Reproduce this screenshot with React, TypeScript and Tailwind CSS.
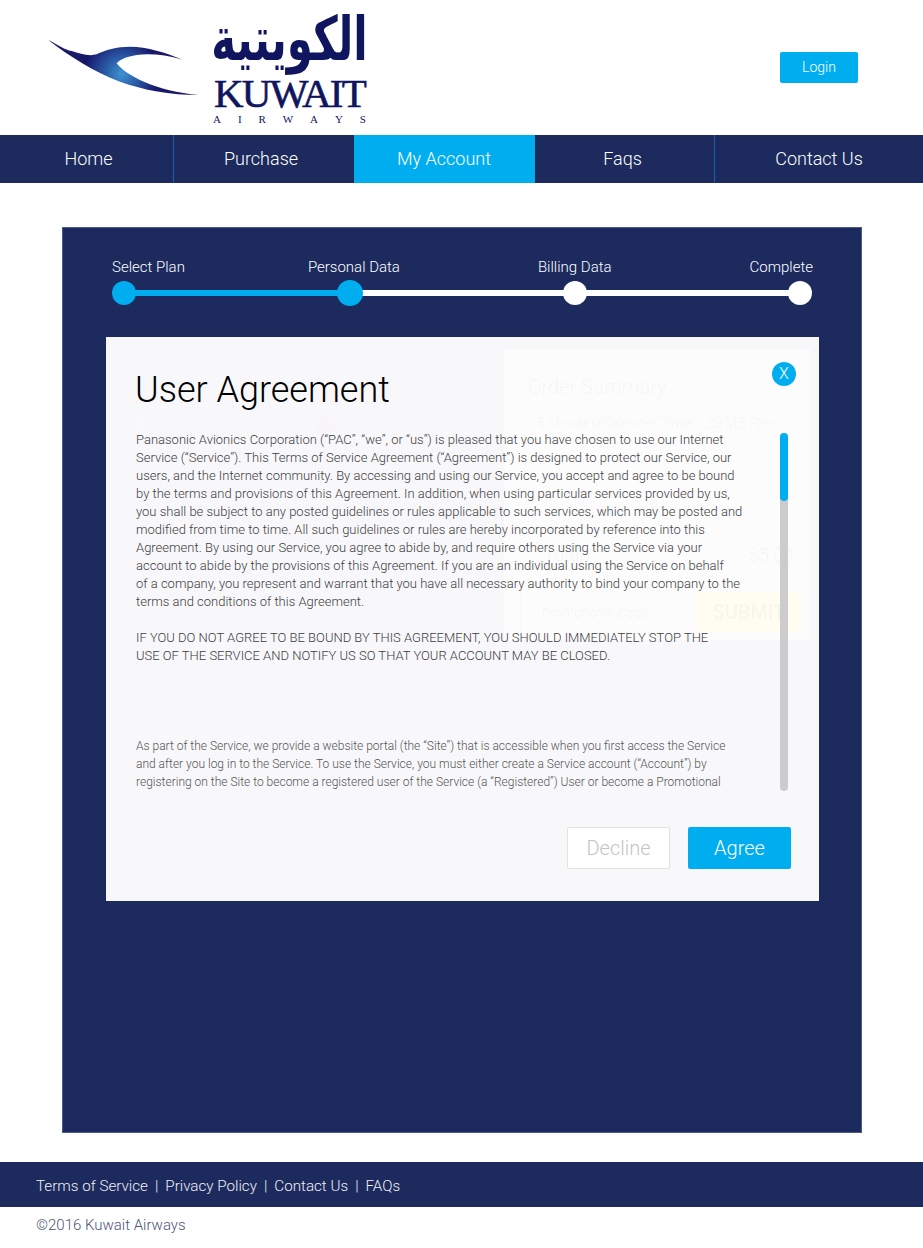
import React from "react";

const navItems = [
  { label: "Home", cls: "pl-[4px] border-r border-[#1d5fa8]" },
  { label: "Purchase", cls: "pr-[6px]" },
  { label: "My Account", cls: "pr-[1px] bg-[#00aeef]" },
  { label: "Faqs", cls: "pr-[4px] border-r border-[#1d5fa8]" },
  { label: "Contact Us", cls: "" },
];

const para1 = [
  "Panasonic Avionics Corporation (“PAC”, “we”, or “us”) is pleased that you have chosen to use our Internet",
  "Service (“Service”). This Terms of Service Agreement (“Agreement”) is designed to protect our Service, our",
  "users, and the Internet community. By accessing and using our Service, you accept and agree to be bound",
  "by the terms and provisions of this Agreement. In addition, when using particular services provided by us,",
  "you shall be subject to any posted guidelines or rules applicable to such services, which may be posted and",
  "modified from time to time. All such guidelines or rules are hereby incorporated by reference into this",
  "Agreement. By using our Service, you agree to abide by, and require others using the Service via your",
  "account to abide by the provisions of this Agreement. If you are an individual using the Service on behalf",
  "of a company, you represent and warrant that you have all necessary authority to bind your company to the",
  "terms and conditions of this Agreement.",
];

const para2 = [
  "IF YOU DO NOT AGREE TO BE BOUND BY THIS AGREEMENT, YOU SHOULD IMMEDIATELY STOP THE",
  "USE OF THE SERVICE AND NOTIFY US SO THAT YOUR ACCOUNT MAY BE CLOSED.",
];

const para3 = [
  "As part of the Service, we provide a website portal (the “Site”) that is accessible when you first access the Service",
  "and after you log in to the Service. To use the Service, you must either create a Service account (“Account”) by",
  "registering on the Site to become a registered user of the Service (a “Registered”) User or become a Promotional",
];

const Logo = () => (
  <div className="flex items-start">
    <svg width="155" height="60" viewBox="51 111 465 180" className="ml-[47px] mt-[37px]">
      <defs>
        <radialGradient id="wing" gradientUnits="userSpaceOnUse" cx="275" cy="222" r="140">
          <stop offset="0" stopColor="#3f92d2" />
          <stop offset="0.35" stopColor="#2a5ca6" />
          <stop offset="0.8" stopColor="#17176b" />
          <stop offset="1" stopColor="#1a1a66" />
        </radialGradient>
      </defs>
      <path
        d="M55 120 C85 135 105 150 125 153 C150 160 175 170 200 163 C225 150 260 140 300 140 C350 140 410 158 457 179 C410 165 360 160 320 165 C290 170 270 178 260 190 C285 225 380 275 507 285 C420 285 340 270 270 245 C190 215 120 170 55 120 Z"
        fill="url(#wing)"
      />
    </svg>
    <div className="ml-[11px] flex w-[153px] flex-col items-center text-[#10155f]">
      <div
        dir="rtl"
        className="mt-[9px] h-[62px] scale-y-[1.45] text-[42px] leading-[62px] font-bold whitespace-nowrap [font-family:'DejaVu_Sans',sans-serif]"
      >
        الكويتية
      </div>
      <div className="mt-[2px] text-[41px] leading-[40px] tracking-[-1.8px] whitespace-nowrap [-webkit-text-stroke:0.6px_#10155f] [font-family:'Liberation_Serif',serif]">
        KUWAIT
      </div>
      <div className="flex w-full justify-between text-[11px] leading-[12px] [font-family:'Liberation_Serif',serif]">
        {"AIRWAYS".split("").map((c, i) => (
          <span key={i}>{c}</span>
        ))}
      </div>
    </div>
  </div>
);

const Stepper = () => (
  <div className="mx-[49px] pt-[30px]">
    <div className="flex text-[15px] leading-[18px] font-light whitespace-nowrap text-white">
      <span>Select Plan</span>
      <span className="ml-[123px]">Personal Data</span>
      <span className="ml-[138px]">Billing Data</span>
      <span className="-mr-[1px] ml-auto">Complete</span>
    </div>
    <div className="relative mt-[4px] flex h-[26px] items-center justify-between">
      <div className="absolute left-[12px] right-[12px] h-[6px] bg-white" />
      <div className="absolute left-[12px] h-[6px] w-[226px] bg-[#00aeef]" />
      <div className="relative h-6 w-6 rounded-full bg-[#00aeef]" />
      <div className="relative h-[26px] w-[26px] rounded-full bg-[#00aeef]" />
      <div className="relative h-6 w-6 rounded-full bg-white" />
      <div className="relative h-6 w-6 rounded-full bg-white" />
    </div>
  </div>
);

// what is left of the page behind the modal, barely visible
const GhostPage = () => (
  <>
    <div className="absolute left-[25px] top-[78px] h-[18px] w-[18px] rounded-full border border-[#1c2a5e]/[0.02] bg-white/20" />
    <div className="absolute left-[210px] top-[78px] h-5 w-5 rounded-full bg-[#fdeef2]/25" />
    <div className="absolute left-[398px] top-[12px] h-[291px] w-[306px] bg-white/60 text-[#1c2a5e]/[0.05]">
      <div className="ml-[24px] mt-[25px] text-[20px] leading-[26px]">Order Summary</div>
      <div className="ml-[33px] mt-[13px] text-[14px] leading-[20px] whitespace-nowrap">5 Minutes(Calender Time) - 20 MB Plan</div>
      <div className="mt-[110px] flex justify-between pl-[40px] pr-[17px] text-[18px] leading-[24px]">
        <span>Total</span>
        <span>$5.00</span>
      </div>
      <div className="ml-[16px] mr-[9px] mt-[25px] flex h-[40px] items-center justify-between border-l border-[#1c2a5e]/[0.02] pl-[21px]">
        <span className="text-[13.5px]">Promotional Code</span>
        <span className="flex h-[40px] w-[104px] items-center justify-center bg-[#fffdf2] text-[20px] font-medium text-[#1c2a5e]/[0.05]">SUBMIT</span>
      </div>
    </div>
  </>
);

const Modal = () => (
  <div className="relative ml-[43px] mt-[31px] h-[564px] w-[713px] bg-[#f8f8fb] font-light text-[#3d3d3d]">
    <GhostPage />
    <button className="absolute right-[23px] top-[25px] flex h-6 w-6 items-center justify-center rounded-full bg-[#00aeef] text-[16px] font-light text-white">
      X
    </button>
    <div className="relative pl-[30px] pt-[31px]">
      <h1 className="-ml-[1px] text-[36px] leading-[44px] font-light text-black">User Agreement</h1>
      <div className="relative mt-[19px] flex h-[360px] items-start">
        <div className="w-[644px] shrink-0 text-[13px] leading-[18px] whitespace-nowrap">
          {para1.map((l) => (
            <div key={l}>{l}</div>
          ))}
          <div className="mt-[18px]">
            {para2.map((l) => (
              <div key={l}>{l}</div>
            ))}
          </div>
          <div className="mt-[72px] text-[12px] text-[#555]">
            {para3.map((l) => (
              <div key={l}>{l}</div>
            ))}
          </div>
        </div>
        <div className="mt-[2px] h-[358px] w-2 rounded-full bg-[#cccccc]">
          <div className="h-[68px] rounded-full bg-[#00aeef]" />
        </div>
      </div>
      <div className="mt-[36px] flex justify-end gap-[18px] pr-[28px]">
        <button className="h-[42px] w-[103px] rounded-[2px] border border-[#e2e2e2] bg-white text-[20px] font-light text-[#c4c4c4]">
          Decline
        </button>
        <button className="h-[42px] w-[103px] rounded-[2px] bg-[#00aeef] text-[20px] font-light text-white">
          Agree
        </button>
      </div>
    </div>
  </div>
);

export default function App() {
  return (
    <div className="w-[923px] bg-white font-light [font-family:Roboto,sans-serif]">
      <header className="flex h-[135px] items-start justify-between">
        <Logo />
        <button className="mr-[65px] mt-[52px] h-[31px] w-[78px] rounded-[2px] bg-[#00aeef] text-[14px] font-light text-white">
          Login
        </button>
      </header>

      <nav className="grid h-[48px] grid-cols-[174px_180px_181px_180px_208px] bg-[#1c2a5e] text-[18px] text-white">
        {navItems.map((n) => (
          <div key={n.label} className={"flex items-center justify-center pb-[2px] " + n.cls}>
            {n.label}
          </div>
        ))}
      </nav>

      <main className="px-[62px] pt-[44px] pb-[29px]">
        <div className="h-[906px] w-[800px] border border-[#4a5a8a] bg-[#1c2a5e]">
          <Stepper />
          <Modal />
        </div>
      </main>

      <footer className="flex h-[45px] items-center gap-[7px] bg-[#1c2a5e] pl-[36px] pt-[3px] text-[15.2px] text-[#f0f0f5]">
        <span>Terms of Service</span>
        <span>|</span>
        <span>Privacy Policy</span>
        <span>|</span>
        <span>Contact Us</span>
        <span>|</span>
        <span>FAQs</span>
      </footer>
      <div className="h-[41px] pl-[36px] pt-[9px] text-[15px] leading-[18px] text-[#4b5578]">©2016 Kuwait Airways</div>
    </div>
  );
}
